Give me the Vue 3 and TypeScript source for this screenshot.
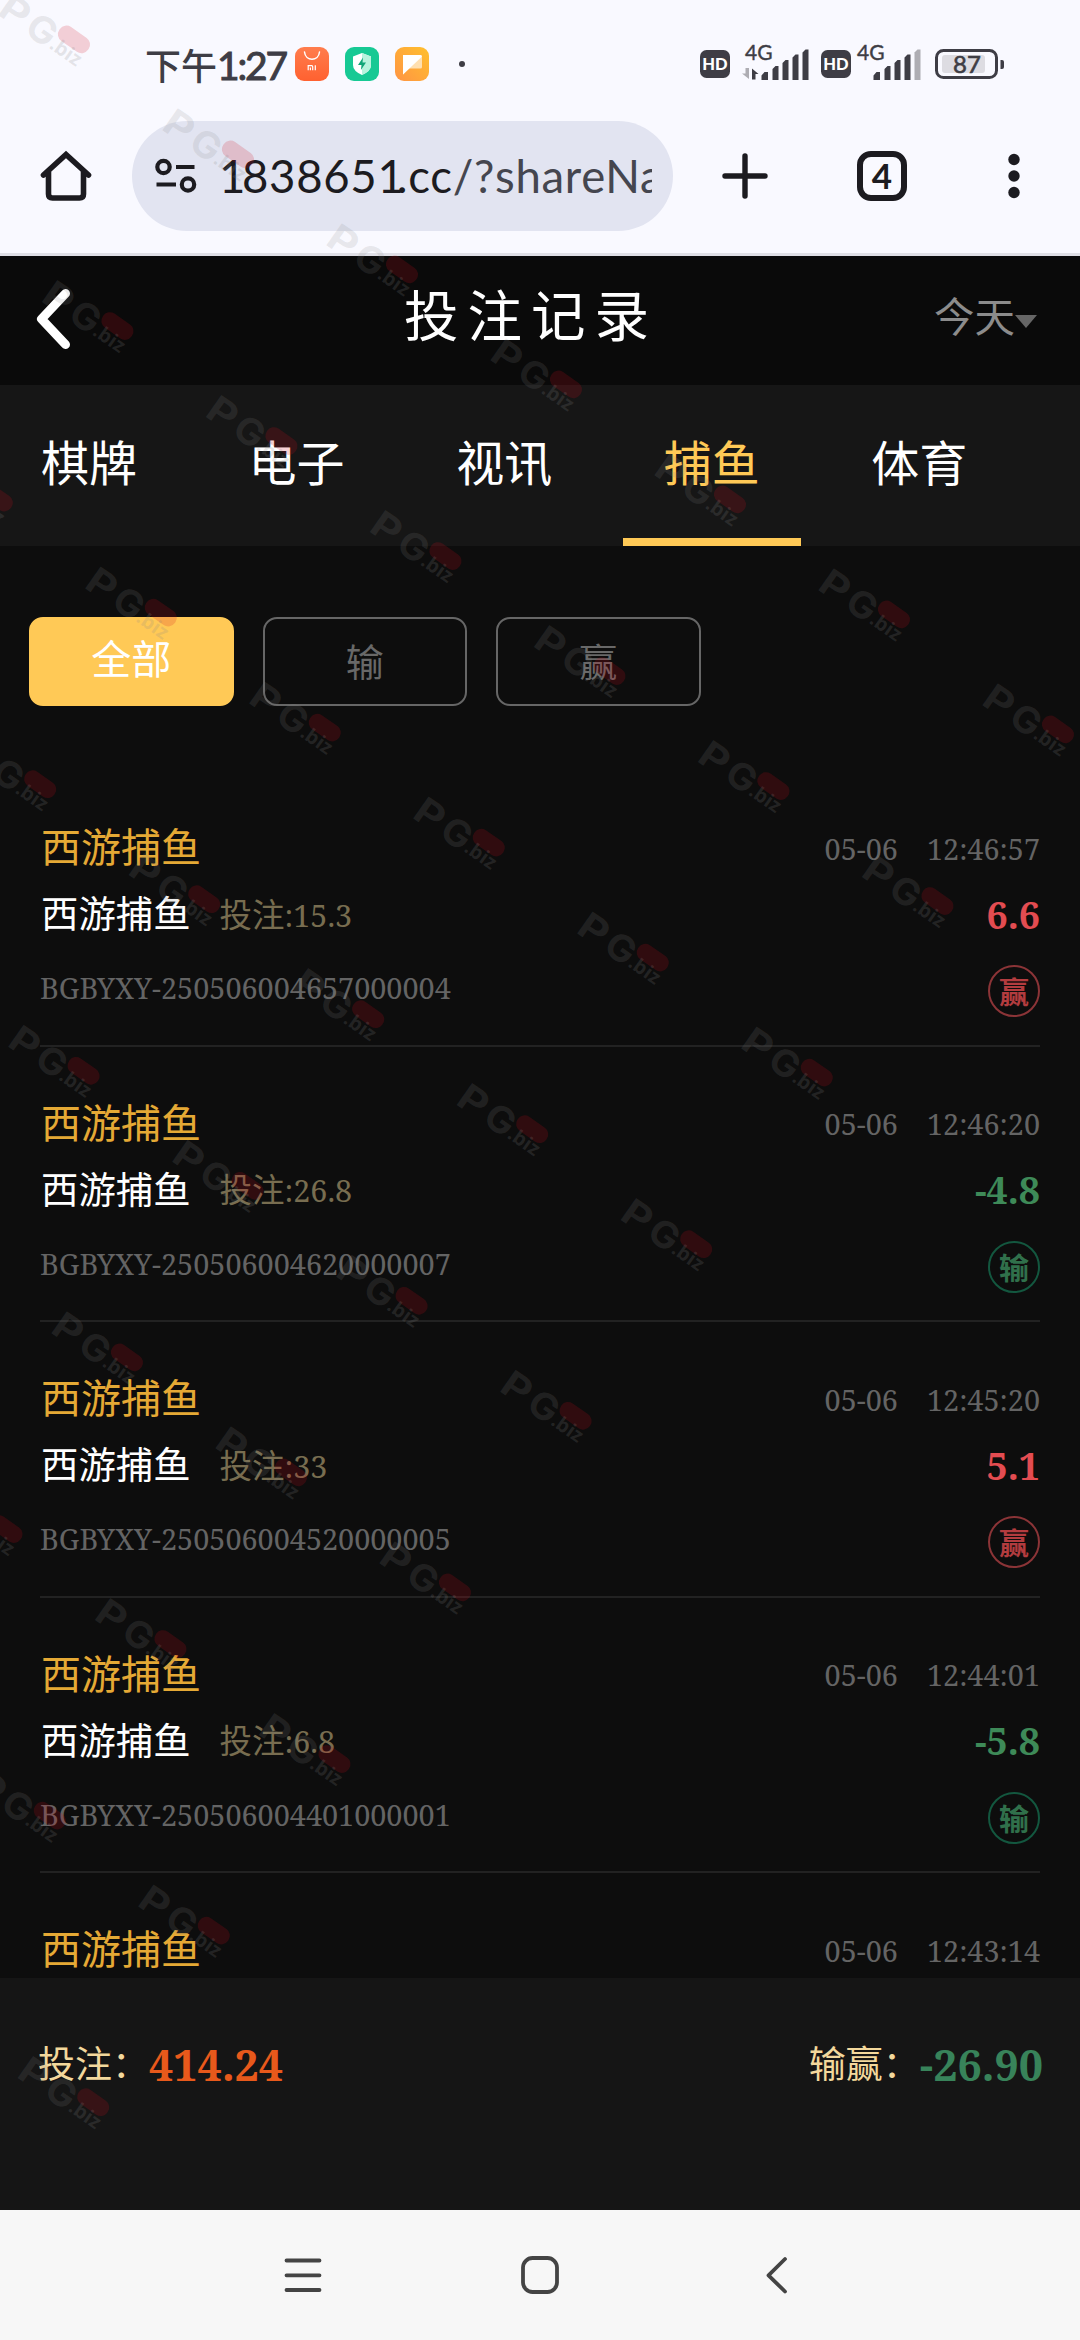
<script setup lang="ts">
interface BetRecord {
  game: string
  date: string
  time: string
  detail?: { id: string; stake: string; amount: string; win: boolean }
}

interface Mark {
  x: number
  y: number
}

const tabs: string[] = ['棋牌', '电子', '视讯', '捕鱼', '体育']
const activeTab = '捕鱼'
const filters: string[] = ['全部', '输', '赢']
const activeFilter = '全部'

const records: BetRecord[] = [
  { game: '西游捕鱼', date: '05-06', time: '12:46:57', detail: { id: 'BGBYXY-250506004657000004', stake: '15.3', amount: '6.6', win: true } },
  { game: '西游捕鱼', date: '05-06', time: '12:46:20', detail: { id: 'BGBYXY-250506004620000007', stake: '26.8', amount: '-4.8', win: false } },
  { game: '西游捕鱼', date: '05-06', time: '12:45:20', detail: { id: 'BGBYXY-250506004520000005', stake: '33', amount: '5.1', win: true } },
  { game: '西游捕鱼', date: '05-06', time: '12:44:01', detail: { id: 'BGBYXY-250506004401000001', stake: '6.8', amount: '-5.8', win: false } },
  { game: '西游捕鱼', date: '05-06', time: '12:43:14' },
]

// Diagonal watermark lattice: each row starts at its own column and gets shorter going down.
const firstColumn: number[] = [0, 0, -1, -1, -1, -1, -2, -2, -2]
const marks: Mark[] = firstColumn.flatMap((start, i) => {
  const row = i - 1
  const list: Mark[] = []
  for (let col = start; col <= 5 - row; col++) {
    list.push({ x: 41 + 43.4 * row + 164 * col, y: 278 + 286.6 * row + 115 * col })
  }
  return list
})
</script>

<template>
  <div class="screen">
    <header class="status">
      <div class="status-left">
        <span class="clock">下午<b>1:27</b></span>
        <svg class="app" viewBox="0 0 34 34">
          <defs>
            <linearGradient id="g1" x1="0" y1="0" x2="0" y2="1"><stop offset="0" stop-color="#ff7d4d" /><stop offset="1" stop-color="#ff6130" /></linearGradient>
          </defs>
          <rect width="34" height="34" rx="9" fill="url(#g1)" />
          <path d="M9.500 5c1 9.500 14 9.500 15 0" fill="none" stroke="#fff" stroke-width="1.500" stroke-linecap="round" />
          <path d="M13.200 23.300v-4.600h3.500q1 0 1 1v3.600M15.400 20.500v2.800M20.300 18.300v5" fill="none" stroke="#fff" stroke-width="1.200" />
        </svg>
        <svg class="app" viewBox="0 0 34 34">
          <rect width="34" height="34" rx="9" fill="#17c994" />
          <path d="M17 6l9 3.500v8.500q0 6-9 10q-9-4-9-10V9.500z" fill="#fff" />
          <path d="M17 6l9 3.500v8.500q0 6-9 10z" fill="#b7f3dd" />
          <path d="M18 10.500l-5 7.500h3.500l-.6 5 5.100-7.500h-3.500z" fill="#0fa577" />
        </svg>
        <svg class="app" viewBox="0 0 34 34">
          <defs>
            <linearGradient id="g3" x1="1" y1="0" x2="0" y2="1"><stop offset="0" stop-color="#ffc02e" /><stop offset="1" stop-color="#ff9443" /></linearGradient>
          </defs>
          <rect width="34" height="34" rx="9" fill="url(#g3)" />
          <path d="M8 8h17.500q1.500 0 1.500 1.500V20q0 1.500-1.500 1.500H14l-6 6z" fill="#ffe0b0" />
          <path d="M8 8h17.500q1.500 0 1.300 1.800L8 27.500z" fill="#fff" />
        </svg>
        <i class="more-dot"></i>
      </div>
      <svg class="status-right" viewBox="700 40 310 46">
        <g fill="#3e3d45">
          <rect x="700" y="50" width="30" height="28" rx="6.500" />
          <rect x="821" y="50" width="30" height="28" rx="6.500" />
          <path d="M761.500 80v-4.500l3-3.500h3.500v8zM772.500 80V69l3-3h3v14zM782.500 80V63l3-3h3v20zM792.500 80V57.500l3-3h3V80zM802.500 80V52.500l3-3h3V80z" />
          <path d="M873.500 80v-4.500l3-3.500h3.500v8zM884.500 80V69l3-3h3v14zM894.500 80V63l3-3h3v20zM904.500 80V57.500l3-3h3V80z" />
          <path d="M752 68.500l6.500 5.500h-3v5.500h-3.500z" />
        </g>
        <path d="M914.500 80V52.500l3-3h3V80z" fill="#aeadb3" />
        <path d="M749 79l-7-5.500h3.500V68h3.500z" fill="#aeadb3" />
        <g class="hd"><text x="715" y="69.800" text-anchor="middle">HD</text><text x="836" y="69.800" text-anchor="middle">HD</text></g>
        <g class="net"><text x="745" y="60">4G</text><text x="857" y="60">4G</text></g>
        <rect x="936.500" y="50.500" width="60" height="27" rx="7" fill="none" stroke="#3e3d45" stroke-width="3" />
        <rect x="942" y="55" width="43" height="18" rx="3" fill="#dddce2" />
        <path d="M1000.500 60h1.500q2 0 2 2v5q0 2-2 2h-1.500z" fill="#3e3d45" />
        <text class="level" x="967" y="73" text-anchor="middle">87</text>
      </svg>
    </header>

    <div class="browser">
      <svg class="home" viewBox="0 0 52 52">
        <path d="M3.500 25L26 4.500 48.500 25M8.500 21v23q0 4 4 4h27q4 0 4-4V21" fill="none" stroke="#1c1b20" stroke-width="5.600" stroke-linecap="round" stroke-linejoin="miter" />
      </svg>
      <div class="url">
        <svg class="tune" viewBox="0 0 42 36" fill="none" stroke="#1c1b20" stroke-width="4.200">
          <circle cx="8.500" cy="9" r="6.200" /><path d="M21 9h18.500M1.500 26.500h19.500" /><circle cx="33" cy="26.500" r="6.200" />
        </svg>
        <div class="address"><span class="one">1</span>83865<span class="one last">1</span>.cc<span class="path">/?shareNa</span></div>
      </div>
      <svg class="plus" viewBox="0 0 46 46"><path d="M23 3v40M3 23h40" stroke="#1c1b20" stroke-width="5.400" stroke-linecap="round" /></svg>
      <div class="count">4</div>
      <svg class="kebab" viewBox="0 0 12 46" fill="#1c1b20"><circle cx="6" cy="6.500" r="5.700" /><circle cx="6" cy="23" r="5.700" /><circle cx="6" cy="39.500" r="5.700" /></svg>
    </div>

    <main class="page">
      <div class="title-bar">
        <svg class="back" viewBox="0 0 36 62"><path d="M29.500 5.500L5.500 31 29.500 56.500" fill="none" stroke="#fff" stroke-width="9" stroke-linecap="round" stroke-linejoin="round" /></svg>
        <h1>投注记录</h1>
        <div class="period">今天<i></i></div>
      </div>

      <nav class="tabs">
        <div v-for="tab in tabs" :key="tab" class="tab" :class="{ active: tab === activeTab }">{{ tab }}</div>
      </nav>

      <div class="filters">
        <div v-for="f in filters" :key="f" class="filter" :class="{ active: f === activeFilter }">{{ f }}</div>
      </div>

      <section class="list">
        <article v-for="r in records" :key="r.time" class="record">
          <div class="row head">
            <span class="game">{{ r.game }}</span>
            <span class="when"><span>{{ r.date }}</span><span>{{ r.time }}</span></span>
          </div>
          <template v-if="r.detail">
            <div class="row mid">
              <span class="sub">{{ r.game }}</span>
              <span class="stake">投注<em>:{{ r.detail.stake }}</em></span>
              <span class="amount" :class="{ win: r.detail.win }">{{ r.detail.amount }}</span>
            </div>
            <div class="row foot">
              <span class="id">{{ r.detail.id }}</span>
              <span class="badge" :class="{ win: r.detail.win }">{{ r.detail.win ? '赢' : '输' }}</span>
            </div>
          </template>
        </article>
      </section>

      <footer class="totals">
        <div class="total"><span>投注：</span><b class="bet">414.24</b></div>
        <div class="total"><span>输赢：</span><b class="net-loss">-26.90</b></div>
      </footer>
    </main>

    <div class="navbar">
      <svg viewBox="0 0 44 44"><path d="M5.500 7.500h33M5.500 22.300h33M5.500 37h33" /></svg>
      <svg viewBox="0 0 44 44"><rect x="5" y="5" width="34" height="34" rx="9.500" /></svg>
      <svg viewBox="0 0 44 44"><path d="M30 6L13.500 22.300 30 38.500" /></svg>
    </div>

    <svg class="watermark" viewBox="0 0 1080 2340">
      <g v-for="(m, i) in marks" :key="i" :transform="`translate(${m.x} ${m.y + 22}) rotate(35)`">
        <text class="wm-big" transform="scale(1.2 1)" x="-1" y="1">P</text>
        <text class="wm-big" transform="scale(1.05 1)" x="30" y="1">G</text>
        <rect x="60" y="-31" width="35" height="17" rx="8" />
        <text class="wm-small" x="61" y="-1">.biz</text>
      </g>
    </svg>
  </div>
</template>

<style>
body {
  margin: 0;
  background: #0d0d0d;
}
</style>

<style scoped>
.screen {
  position: relative;
  width: 1080px;
  height: 2340px;
  overflow: hidden;
  display: flex;
  flex-direction: column;
  background: #0d0d0d;
  font-family: Lato, "Noto Sans CJK SC", sans-serif;
}
.screen > * {
  flex: none;
}
.status {
  height: 121px;
  background: #f9f9ff;
  display: flex;
  justify-content: space-between;
  padding: 0 70px 0 145px;
  box-sizing: border-box;
}
.status-left {
  display: flex;
  align-items: center;
  height: 128px;
}
.clock {
  width: 150px;
  font-size: 36px;
  font-weight: 500;
  line-height: 50px;
  white-space: nowrap;
  color: #3e3d45;
  font-family: "Noto Sans CJK SC", sans-serif;
}
.clock b {
  font-family: Lato, sans-serif;
  font-weight: 400;
  font-size: 39px;
  letter-spacing: -2.2px;
  -webkit-text-stroke: 1px #3e3d45;
}
.app {
  width: 34px;
  height: 34px;
  margin-right: 16px;
}
.more-dot {
  width: 6px;
  height: 6px;
  border-radius: 50%;
  background: #3e3d45;
  margin-left: 14px;
}
.status-right {
  width: 310px;
  height: 46px;
  margin-top: 40px;
}
.hd text {
  font: 900 16.500px Lato, sans-serif;
  fill: #fff;
}
.net text {
  font: 400 21px Lato, sans-serif;
  fill: #3e3d45;
  stroke: #3e3d45;
  stroke-width: 0.4px;
}
.level {
  font: 400 24px Lato, sans-serif;
  fill: #3e3d45;
  stroke: #3e3d45;
  stroke-width: 0.6px;
}
.browser {
  height: 135px;
  box-sizing: border-box;
  background: #f9f9ff;
  border-bottom: 3px solid #dfdfe6;
  display: flex;
  align-items: flex-start;
  padding-left: 40px;
}
.home {
  width: 52px;
  height: 52px;
  margin-top: 29px;
}
.url {
  margin-left: 40px;
  width: 541px;
  height: 110px;
  border-radius: 55px;
  background: #e2e4f1;
  display: flex;
  align-items: center;
  box-sizing: border-box;
  padding-left: 23px;
}
.tune {
  width: 42px;
  height: 36px;
}
.address {
  margin-left: 22px;
  width: 433px;
  overflow: hidden;
  white-space: nowrap;
  font-size: 45.500px;
  line-height: 60px;
  letter-spacing: 0.700px;
  color: #1c1b20;
}
.one {
  letter-spacing: -3.400px;
}
.one.last {
  letter-spacing: -7px;
}
.path {
  color: #45464f;
}
.plus {
  width: 46px;
  height: 46px;
  margin: 32px 0 0 49px;
}
.count {
  width: 50px;
  height: 50px;
  box-sizing: border-box;
  border: 6px solid #1c1b20;
  border-radius: 14px;
  margin: 30px 0 0 89px;
  font-size: 35px;
  font-weight: 700;
  line-height: 37px;
  text-align: center;
  color: #1c1b20;
}
.kebab {
  width: 12px;
  height: 46px;
  margin: 32px 0 0 101px;
}
.page {
  height: 1954px;
  display: flex;
  flex-direction: column;
  font-family: "Noto Sans CJK SC", sans-serif;
}
.page > * {
  flex: none;
}
.title-bar {
  height: 129px;
  background: #0a0a0a;
  display: grid;
  grid-template-columns: 240px 1fr 240px;
}
.back {
  width: 36px;
  height: 62px;
  margin: 32px 0 0 36px;
}
h1 {
  margin: 0;
  text-align: center;
  font-size: 54.500px;
  font-weight: 400;
  letter-spacing: 9px;
  text-indent: -18px;
  line-height: 114px;
  color: #fff;
}
.period {
  display: flex;
  align-items: flex-start;
  padding-left: 94px;
  font-size: 40.500px;
  line-height: 117px;
  color: #8c8c8c;
}
.period i {
  border: 11px solid transparent;
  border-top: 13px solid #666;
  border-bottom: 0;
  margin-top: 59px;
}
.tabs {
  height: 161px;
  background: #161616;
  display: flex;
  gap: 29.600px;
}
.tab {
  width: 178px;
  height: 161px;
  box-sizing: border-box;
  text-align: center;
  font-size: 48px;
  line-height: 150px;
  color: #fff;
  border-bottom: 8px solid transparent;
}
.tab.active {
  color: #ffc956;
  border-color: #ffc956;
}
.filters {
  display: flex;
  gap: 29px;
  padding: 71px 0 0 29px;
}
.filter {
  width: 204.500px;
  height: 89px;
  box-sizing: border-box;
  border: 2px solid #666;
  border-radius: 14px;
  text-align: center;
  font-size: 38px;
  line-height: 81px;
  color: #686868;
}
.filter.active {
  font-size: 40px;
  line-height: 76px;
  background: #ffc956;
  border-color: #ffc956;
  color: #fff;
}
.list {
  height: 1207px;
  margin-top: 65px;
  overflow: hidden;
  padding: 0 40px;
}
.record {
  height: 275.600px;
  box-sizing: border-box;
  border-bottom: 2px solid #222;
  padding-top: 48px;
}
.row {
  display: flex;
  align-items: center;
}
.head {
  height: 52px;
  justify-content: space-between;
}
.game {
  font-size: 40px;
  line-height: 52px;
  padding-left: 1px;
  color: #e5a935;
}
.when {
  display: flex;
  gap: 29px;
  padding-top: 6px;
  font-family: "Noto Serif", "DejaVu Serif Condensed", "Liberation Serif", serif;
  font-size: 28.800px;
  color: #646464;
}
.mid {
  height: 82px;
}
.sub {
  font-size: 37.400px;
  padding-left: 1px;
  color: #fff;
}
.stake {
  margin-left: 29px;
  font-size: 32.500px;
  color: #786d50;
}
.stake em {
  font-style: normal;
  font-family: "Noto Serif", "DejaVu Serif Condensed", "Liberation Serif", serif;
  font-size: 30.500px;
}
.amount {
  margin-left: auto;
  padding-top: 4px;
  font-family: "Noto Serif", "DejaVu Serif Condensed", "Liberation Serif", serif;
  font-weight: 700;
  font-size: 37.500px;
  color: #3e8a58;
}
.amount.win {
  color: #e34c51;
}
.foot {
  height: 68px;
  justify-content: space-between;
}
.id {
  padding-top: 1px;
  font-family: "Noto Serif", "DejaVu Serif Condensed", "Liberation Serif", serif;
  font-size: 28.800px;
  color: #646464;
}
.badge {
  width: 52px;
  height: 52px;
  margin-top: 8px;
  box-sizing: border-box;
  border: 2px solid #13573f;
  border-radius: 50%;
  text-align: center;
  font-size: 30px;
  font-weight: 700;
  line-height: 47px;
  color: #30704b;
}
.badge.win {
  border-color: #8b3437;
  color: #b33c3f;
}
.totals {
  height: 232px;
  background: #151515;
  display: flex;
  justify-content: space-between;
  padding: 0 37px 0 38px;
}
.total {
  display: flex;
  font-size: 37px;
  line-height: 168px;
  color: #f3d89c;
}
.total b {
  font-family: "Noto Serif", "DejaVu Serif Condensed", "Liberation Serif", serif;
  font-size: 43px;
  line-height: 173px;
}
.bet {
  color: #e8591b;
}
.net-loss {
  color: #38835a;
}
.navbar {
  height: 130px;
  background: #f7f7f7;
  display: flex;
  justify-content: center;
  align-items: center;
  gap: 193px;
}
.navbar svg {
  width: 44px;
  height: 44px;
  fill: none;
  stroke: #444;
  stroke-width: 3.800;
  stroke-linecap: round;
  stroke-linejoin: round;
}
.watermark {
  position: absolute;
  inset: 0;
  width: 1080px;
  height: 2340px;
  pointer-events: none;
}
.watermark rect {
  fill: rgba(210, 10, 30, 0.18);
}
.wm-big {
  font: 700 37px Inter, sans-serif;
  fill: rgba(135, 135, 135, 0.17);
}
.wm-small {
  font: 700 20px "Noto Sans", sans-serif;
  fill: rgba(135, 135, 135, 0.19);
}
</style>
